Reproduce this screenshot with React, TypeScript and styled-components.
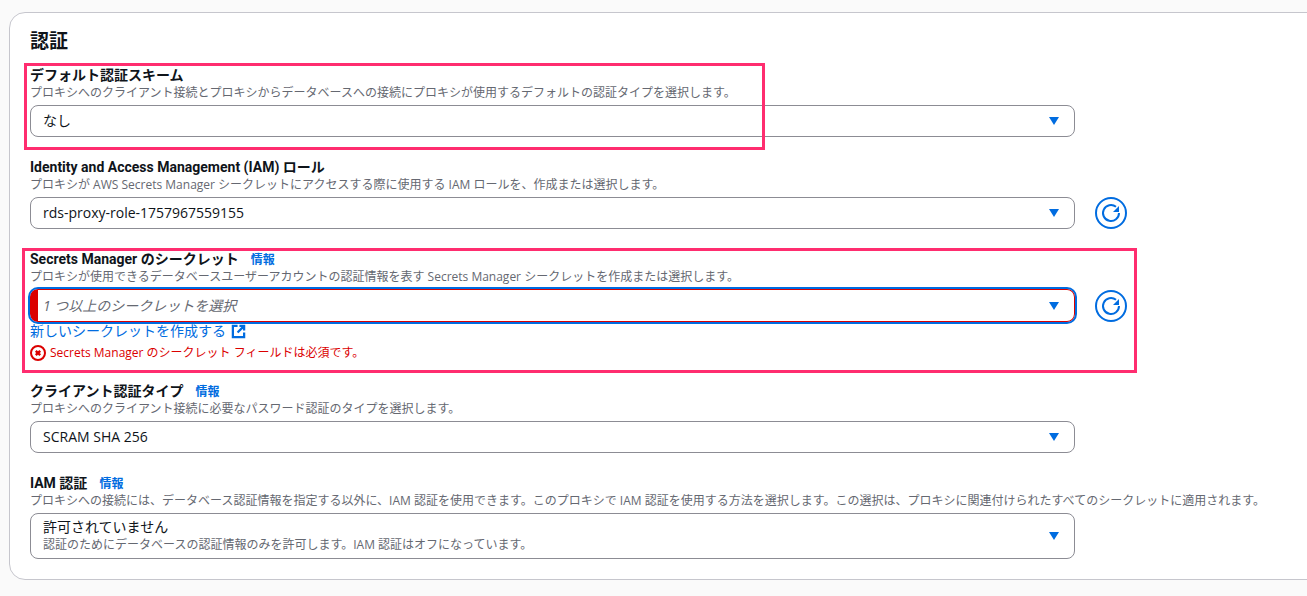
import {ReactNode} from 'react'
import styled, {createGlobalStyle} from 'styled-components'

const GlobalStyle = createGlobalStyle`
    html, body {
        margin: 0;
        background: #fafafa;
        font-family: "Open Sans", "Noto Sans CJK JP", sans-serif;
        overflow: hidden;
    }
`
const Page = styled.div`
    width: 1307px;
    height: 596px;
    padding: 12px 0 0 9px;
    box-sizing: border-box;
    overflow: hidden;
`
const Card = styled.section`
    position: relative;
    width: 1320px;
    height: 568px;
    box-sizing: border-box;
    padding: 16px 0 0 20px;
    background: #ffffff;
    border: 1px solid #c6c6cd;
    border-radius: 16px;
`
const Heading = styled.h2`
    margin: 0 0 12px;
    height: 25px;
    font-size: 19px;
    line-height: 25px;
    font-weight: 600;
    color: #0f141a;
`
const Field = styled.div<{$gap: number}>`
    margin-bottom: ${p => p.$gap}px;
`
const LabelRow = styled.div`
    display: flex;
    align-items: center;
    gap: 12px;
    height: 18px;
    box-sizing: border-box;
    padding-top: 1px;
`
const Label = styled.span`
    font-family: Roboto, "Noto Sans CJK JP", sans-serif;
    font-size: 14px;
    line-height: 17px;
    font-weight: 700;
    color: #0f141a;
`
const Info = styled.a`
    font-size: 12px;
    line-height: 17px;
    font-weight: 600;
    color: #006ce0;
`
const Desc = styled.div`
    height: 17px;
    margin: 0 0 4px;
    font-size: 12px;
    line-height: 17px;
    color: #656871;
    white-space: nowrap;
`
const SelectRow = styled.div`
    display: flex;
    align-items: center;
    gap: 20px;
`
const Select = styled.div<{$invalid?: boolean; $tall?: boolean}>`
    position: relative;
    display: flex;
    align-items: center;
    justify-content: space-between;
    box-sizing: border-box;
    width: 1045px;
    height: ${p => (p.$tall ? 46 : p.$invalid ? 33 : 32)}px;
    padding: 0 15px 0 12px;
    background: #ffffff;
    border: 1px solid ${p => (p.$invalid ? '#db0000' : '#8c8c94')};
    border-radius: 8px;
    overflow: hidden;
    ${p => p.$invalid && `
        border-left: 8px solid #db0000;
        padding-left: 5px;
        outline: 2px solid #006ce0;
        outline-offset: 0;
    `}
`
const SelectText = styled.div`
    min-width: 0;
`
const Value = styled.div`
    font-size: 14px;
    line-height: 18px;
    color: #0f141a;
`
const Placeholder = styled.div`
    font-size: 14px;
    line-height: 18px;
    font-style: italic;
    color: #656871;
`
const ValueDesc = styled.div`
    font-size: 12px;
    line-height: 18px;
    color: #656871;
`
const Caret = styled.svg`
    width: 10px;
    height: 8px;
    flex: none;
    fill: #006ce0;
`
const Refresh = styled.svg`
    width: 32px;
    height: 32px;
    flex: none;
    fill: none;
    stroke: #006ce0;
`
const LinkRow = styled.a`
    display: flex;
    align-items: center;
    gap: 5px;
    height: 16px;
    margin-top: 1px;
    font-size: 14px;
    line-height: 16px;
    color: #006ce0;
`
const External = styled.svg`
    width: 15px;
    height: 15px;
    fill: none;
    stroke: #006ce0;
    stroke-width: 2.4;
`
const ErrorRow = styled.div`
    display: flex;
    align-items: center;
    gap: 4px;
    height: 18px;
    margin-top: 5px;
    font-size: 12px;
    line-height: 18px;
    color: #db0000;
`
const ErrorIcon = styled.svg`
    width: 16px;
    height: 16px;
    fill: none;
    stroke: #db0000;
    stroke-width: 2;
`
const Highlight = styled.div<{$x: number; $y: number; $w: number; $h: number}>`
    position: absolute;
    left: ${p => p.$x}px;
    top: ${p => p.$y}px;
    width: ${p => p.$w}px;
    height: ${p => p.$h}px;
    box-sizing: border-box;
    border: 3px solid #ff2d6f;
    pointer-events: none;
`

const CaretIcon = () => (
    <Caret viewBox="0 0 10 8"><path d="M0 0h10L5 8z"/></Caret>
)

const RefreshButton = () => (
    <Refresh viewBox="0 0 32 32">
        <circle cx="16" cy="16" r="15" strokeWidth="2"/>
        <path d="M24 16a8 8 0 1 1-3-6.2" strokeWidth="2"/>
        <path d="M24 9v6h-6z" fill="#006ce0" stroke="none"/>
    </Refresh>
)

function Header({label, info, desc}: {label: string; info?: boolean; desc: string}): ReactNode {
    return (
        <>
            <LabelRow>
                <Label>{label}</Label>
                {info && <Info>情報</Info>}
            </LabelRow>
            <Desc>{desc}</Desc>
        </>
    )
}

export default function App() {
    return (
        <Page>
            <GlobalStyle/>
            <Card>
                <Heading>認証</Heading>

                <Field $gap={21}>
                    <Header label="デフォルト認証スキーム" desc="プロキシへのクライアント接続とプロキシからデータベースへの接続にプロキシが使用するデフォルトの認証タイプを選択します。"/>
                    <Select>
                        <Value>なし</Value>
                        <CaretIcon/>
                    </Select>
                </Field>

                <Field $gap={21}>
                    <Header label="Identity and Access Management (IAM) ロール" desc="プロキシが AWS Secrets Manager シークレットにアクセスする際に使用する IAM ロールを、作成または選択します。"/>
                    <SelectRow>
                        <Select>
                            <Value>rds-proxy-role-1757967559155</Value>
                            <CaretIcon/>
                        </Select>
                        <RefreshButton/>
                    </SelectRow>
                </Field>

                <Field $gap={20}>
                    <Header label="Secrets Manager のシークレット" info desc="プロキシが使用できるデータベースユーザーアカウントの認証情報を表す Secrets Manager シークレットを作成または選択します。"/>
                    <SelectRow>
                        <Select $invalid>
                            <Placeholder>1 つ以上のシークレットを選択</Placeholder>
                            <CaretIcon/>
                        </Select>
                        <RefreshButton/>
                    </SelectRow>
                    <LinkRow>
                        新しいシークレットを作成する
                        <External viewBox="0 0 16 16">
                            <path d="M7 2H2v12h12V9M9 2h5v5M14 2L7 9"/>
                        </External>
                    </LinkRow>
                    <ErrorRow>
                        <ErrorIcon viewBox="0 0 16 16">
                            <circle cx="8" cy="8" r="7"/>
                            <path d="M5.8 5.8l4.4 4.4M10.2 5.8l-4.4 4.4" strokeWidth="2.4"/>
                        </ErrorIcon>
                        Secrets Manager のシークレット フィールドは必須です。
                    </ErrorRow>
                </Field>

                <Field $gap={21}>
                    <Header label="クライアント認証タイプ" info desc="プロキシへのクライアント接続に必要なパスワード認証のタイプを選択します。"/>
                    <Select>
                        <Value>SCRAM SHA 256</Value>
                        <CaretIcon/>
                    </Select>
                </Field>

                <Field $gap={0}>
                    <Header label="IAM 認証" info desc="プロキシへの接続には、データベース認証情報を指定する以外に、IAM 認証を使用できます。このプロキシで IAM 認証を使用する方法を選択します。この選択は、プロキシに関連付けられたすべてのシークレットに適用されます。"/>
                    <Select $tall>
                        <SelectText>
                            <Value>許可されていません</Value>
                            <ValueDesc>認証のためにデータベースの認証情報のみを許可します。IAM 認証はオフになっています。</ValueDesc>
                        </SelectText>
                        <CaretIcon/>
                    </Select>
                </Field>

                <Highlight $x={14} $y={50} $w={741} $h={87}/>
                <Highlight $x={12} $y={235} $w={1115} $h={125}/>
            </Card>
        </Page>
    )
}
